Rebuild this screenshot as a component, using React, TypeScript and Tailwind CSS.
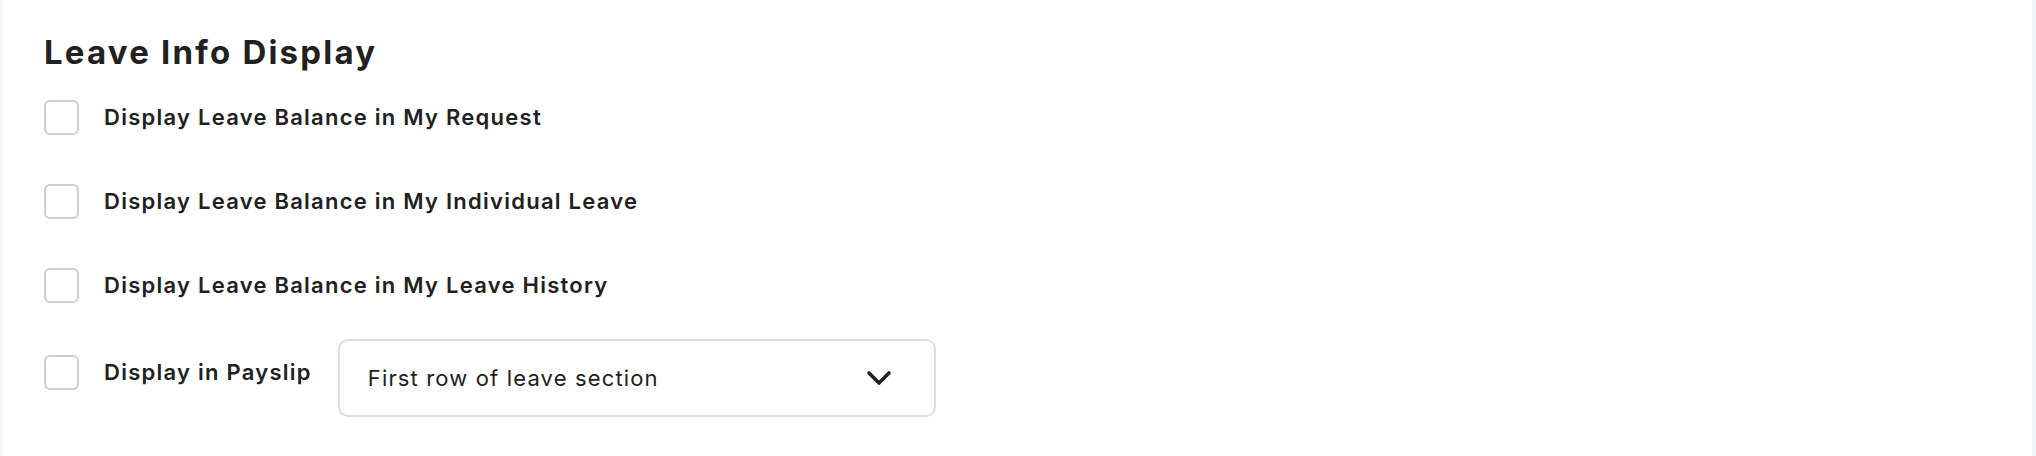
import { useState } from 'react'

const options = [
  'Display Leave Balance in My Request',
  'Display Leave Balance in My Individual Leave',
  'Display Leave Balance in My Leave History',
]

function Checkbox({ checked, onChange }: { checked: boolean; onChange: () => void }) {
  return (
    <button
      type="button"
      onClick={onChange}
      className="w-[35px] h-[35px] shrink-0 rounded-[6px] border-2 border-[#c9cddc] bg-white"
      aria-checked={checked}
      role="checkbox"
    />
  )
}

export default function App() {
  const [checked, setChecked] = useState<boolean[]>([false, false, false, false])

  const toggle = (i: number) =>
    setChecked((prev) => prev.map((v, idx) => (idx === i ? !v : v)))

  return (
    <div
      className="w-full h-[456px] bg-white border-l-[3px] border-r-[4px] border-[#f4f5fa] text-[#212121]"
      style={{ fontFamily: 'Inter, "Noto Sans", sans-serif' }}
    >
      <div className="pl-[41px] pt-[32px]">
        <h2 className="text-[33px] leading-[40px] font-bold tracking-[2.2px]">Leave Info Display</h2>

        {/* Leave balance toggles */}
        <div className="mt-[28px] flex flex-col gap-[49px]">
          {options.map((label, i) => (
            <label key={label} className="flex items-center gap-[25px] h-[35px] cursor-pointer">
              <Checkbox checked={checked[i]} onChange={() => toggle(i)} />
              <span className="text-[22px] font-semibold tracking-[1.25px]">{label}</span>
            </label>
          ))}
        </div>

        {/* Payslip row */}
        <div className="mt-[36px] flex items-start">
          <label className="flex items-center gap-[25px] h-[35px] mt-[16px] cursor-pointer">
            <Checkbox checked={checked[3]} onChange={() => toggle(3)} />
            <span className="text-[22px] font-semibold tracking-[1.25px]">Display in Payslip</span>
          </label>
          <button
            type="button"
            className="ml-[26px] w-[598px] h-[78px] flex items-center justify-between pl-[28px] pr-[42px] border-2 border-[#d8dde0] rounded-[10px] bg-white"
          >
            <span className="text-[22px] font-normal tracking-[1.15px]">First row of leave section</span>
            <svg width="26" height="16" viewBox="0 0 26 16" fill="none">
              <path d="M3 3l10 10L23 3" stroke="#212121" strokeWidth="3.6" strokeLinecap="round" strokeLinejoin="round" />
            </svg>
          </button>
        </div>
      </div>
    </div>
  )
}
